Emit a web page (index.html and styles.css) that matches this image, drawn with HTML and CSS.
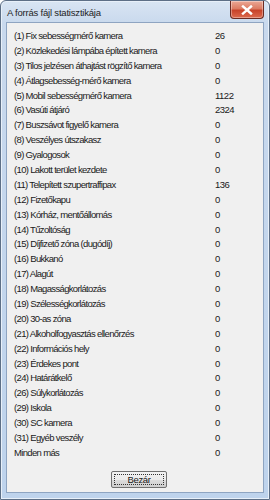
FILE: index.html
```html
<!DOCTYPE html>
<html lang="hu">
<head>
  <meta charset="UTF-8" />
  <title>A forrás fájl statisztikája</title>
  <link rel="stylesheet" href="styles.css">
</head>
<body>

  <div class="window">
    <div class="titlebar">
      <div class="title">A forrás fájl statisztikája</div>
      <div class="close">
        <svg width="12" height="10" viewBox="0 0 12 10">
          <path d="M2 1.5 L10 8.5 M10 1.5 L2 8.5" stroke="#fff" stroke-width="2.4" stroke-linecap="square"/>
        </svg>
      </div>
    </div>

    <div class="client">
      <div class="stats">
        <div class="row"><span class="name">(1) Fix sebességmérő kamera</span><span class="count">26</span></div>
        <div class="row"><span class="name">(2) Közlekedési lámpába épített kamera</span><span class="count">0</span></div>
        <div class="row"><span class="name">(3) Tilos jelzésen áthajtást rögzítő kamera</span><span class="count">0</span></div>
        <div class="row"><span class="name">(4) Átlagsebesség-mérő kamera</span><span class="count">0</span></div>
        <div class="row"><span class="name">(5) Mobil sebességmérő kamera</span><span class="count">1122</span></div>
        <div class="row"><span class="name">(6) Vasúti átjáró</span><span class="count">2324</span></div>
        <div class="row"><span class="name">(7) Buszsávot figyelő kamera</span><span class="count">0</span></div>
        <div class="row"><span class="name">(8) Veszélyes útszakasz</span><span class="count">0</span></div>
        <div class="row"><span class="name">(9) Gyalogosok</span><span class="count">0</span></div>
        <div class="row"><span class="name">(10) Lakott terület kezdete</span><span class="count">0</span></div>
        <div class="row"><span class="name">(11) Telepített szupertraffipax</span><span class="count">136</span></div>
        <div class="row"><span class="name">(12) Fizetőkapu</span><span class="count">0</span></div>
        <div class="row"><span class="name">(13) Kórház, mentőállomás</span><span class="count">0</span></div>
        <div class="row"><span class="name">(14) Tűzoltóság</span><span class="count">0</span></div>
        <div class="row"><span class="name">(15) Díjfizető zóna (dugódíj)</span><span class="count">0</span></div>
        <div class="row"><span class="name">(16) Bukkanó</span><span class="count">0</span></div>
        <div class="row"><span class="name">(17) Alagút</span><span class="count">0</span></div>
        <div class="row"><span class="name">(18) Magasságkorlátozás</span><span class="count">0</span></div>
        <div class="row"><span class="name">(19) Szélességkorlátozás</span><span class="count">0</span></div>
        <div class="row"><span class="name">(20) 30-as zóna</span><span class="count">0</span></div>
        <div class="row"><span class="name">(21) Alkoholfogyasztás ellenőrzés</span><span class="count">0</span></div>
        <div class="row"><span class="name">(22) Információs hely</span><span class="count">0</span></div>
        <div class="row"><span class="name">(23) Érdekes pont</span><span class="count">0</span></div>
        <div class="row"><span class="name">(24) Határátkelő</span><span class="count">0</span></div>
        <div class="row"><span class="name">(26) Súlykorlátozás</span><span class="count">0</span></div>
        <div class="row"><span class="name">(29) Iskola</span><span class="count">0</span></div>
        <div class="row"><span class="name">(30) SC kamera</span><span class="count">0</span></div>
        <div class="row"><span class="name">(31) Egyéb veszély</span><span class="count">0</span></div>
        <div class="row"><span class="name">Minden más</span><span class="count">0</span></div>
      </div>

      <div class="buttons">
        <button class="btn"><span class="focus">Bezár</span></button>
      </div>
    </div>
  </div>

</body>
</html>
```

FILE: styles.css
```css
body {
  margin: 0;
  width: 270px;
  height: 500px;
  background: #fff;
  font-family: "Liberation Sans", Arial, sans-serif;
}
.window {
  box-sizing: border-box;
  width: 270px;
  height: 500px;
  border: 1px solid #5d6f86;
  border-radius: 6px 6px 0 0;
  background: linear-gradient(#d9e5f3 0px, #c9d9ed 22px, #bed3ec 100%);
  padding: 0 5px 6px 5px;
  display: flex;
  flex-direction: column;
  box-shadow: inset 0 0 0 1px #e8f0f9;
}
.titlebar {
  height: 21px;
  display: flex;
  justify-content: space-between;
  align-items: flex-start;
}
.title {
  font-size: 9.5px;
  letter-spacing: -0.2px;
  color: #1e1e1e;
  margin: 6px 0 0 1px;
}
.close {
  width: 32px;
  height: 17px;
  border: 1px solid #6b2a22;
  border-top: none;
  border-radius: 0 0 4px 4px;
  background: linear-gradient(#eba896 0%, #dc7c63 45%, #c8432a 55%, #dd6a4e 100%);
  box-shadow: inset 0 0 0 1px rgba(255,255,255,0.35);
  display: flex;
  align-items: center;
  justify-content: center;
}
.client {
  flex: 1;
  background: #f0f0f0;
  border: 1px solid #8ea4c1;
  display: flex;
  flex-direction: column;
  padding: 6px 0 0 7px;
}
.stats {
  font-size: 9.5px;
  letter-spacing: -0.66px;
  color: #1a1a1a;
}
.row {
  display: flex;
  height: 14.9px;
  line-height: 14.9px;
}
.name {
  width: 201px;
  white-space: nowrap;
}
.count {
  letter-spacing: -0.5px;
}
.buttons {
  padding-left: 97px;
  margin-top: 10px;
}
.btn {
  width: 56px;
  height: 17px;
  padding: 2px;
  border: 1px solid #707070;
  border-radius: 2px;
  background: linear-gradient(#f2f2f2 0%, #ebebeb 50%, #dddddd 51%, #cfcfcf 100%);
  font-family: inherit;
  font-size: 9.5px;
  letter-spacing: -0.4px;
  color: #1a1a1a;
  display: flex;
}
.focus {
  flex: 1;
  border: 1px dotted #333;
  display: flex;
  align-items: center;
  justify-content: center;
  line-height: 1;
}
```
